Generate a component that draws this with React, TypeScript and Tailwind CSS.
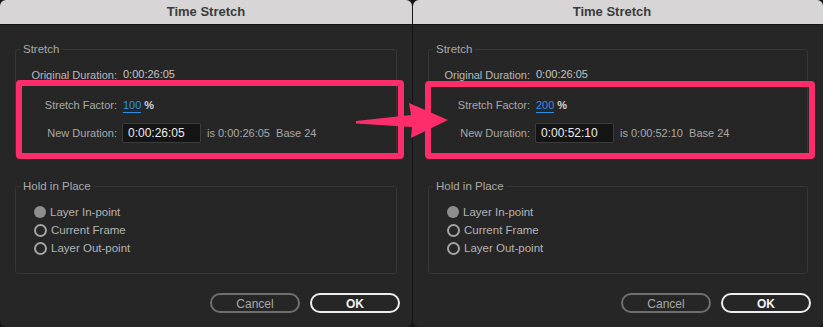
import React from "react";

interface PanelProps {
  factor: string;
  newDuration: string;
  widthClass: string;
  pinkClass: string;
  titleClass?: string;
}

const labelFont = { fontFamily: '"Liberation Sans", Arial, sans-serif' };

const Radio: React.FC<{ checked?: boolean; label: string }> = ({ checked, label }) => (
  <div className="flex h-[18px] items-center gap-[4px]">
    {checked ? (
      <span className="h-[12px] w-[12px] rounded-full bg-[#8e8e8e]" />
    ) : (
      <span className="h-[13px] w-[13px] rounded-full border-2 border-[#a4a4a4]" />
    )}
    <span className="text-[11.5px] text-[#b4b4b4]">{label}</span>
  </div>
);

const TimeStretchPanel: React.FC<PanelProps> = ({ factor, newDuration, widthClass, pinkClass, titleClass = "" }) => {
  return (
    <div className={`relative flex h-full flex-col overflow-hidden rounded-[6px] bg-[#262626] ${widthClass}`} style={labelFont}>
      {/* title bar */}
      <div className={`flex h-[25px] shrink-0 items-center justify-center border-b border-[#141414] bg-[#d7d5d5] ${titleClass}`}>
        <span className="text-[13px] font-bold text-[#3b3b3b]">Time Stretch</span>
      </div>

      <div className="flex flex-1 flex-col px-[15px] pt-[16px]">
        {/* Stretch */}
        <fieldset className="h-[116px] rounded-[3px] border border-[#363636]">
          <legend className="ml-[4px] px-[3px] text-[11.5px] text-[#a9a9a9]">Stretch</legend>
          <div className="ml-[12px] mt-[8px] grid grid-cols-[89px_1fr] items-center gap-x-[6px] text-[11px]">
            <span className="h-[16px] whitespace-nowrap text-right text-[#b8b8b8]">Original Duration:</span>
            <span className="text-[#c4c4c4]">0:00:26:05</span>

            <span className="mt-[14px] h-[16px] whitespace-nowrap text-right text-[#a9a9a9]">Stretch Factor:</span>
            <span className="mt-[14px] flex items-center gap-[3px]">
              <span className="border-b border-[#2f8fe6] leading-[14px] text-[#2f8fe6]">{factor}</span>
              <span className="font-bold text-[#d6d6d6]">%</span>
            </span>

            <span className="mt-[10px] whitespace-nowrap text-right text-[#a9a9a9]">New Duration:</span>
            <span className="-ml-px mt-[10px] flex items-center gap-[6px]">
              <span className="flex h-[20px] w-[79px] items-center rounded-[2px] border border-[#3c3c3c] bg-[#141414] px-[5px] text-[12px] text-[#ececec]">
                {newDuration}
              </span>
              <span className="whitespace-nowrap text-[11px] text-[#a9a9a9]">is {newDuration}&nbsp;&nbsp;Base 24</span>
            </span>
          </div>
        </fieldset>

        {/* Hold in Place */}
        <fieldset className="mt-[21px] h-[96px] rounded-[3px] border border-[#363636] px-[18px]">
          <legend className="-ml-[14px] px-[3px] text-[11.5px] text-[#a9a9a9]">Hold in Place</legend>
          <div className="mt-[8px] flex flex-col">
            <Radio checked label="Layer In-point" />
            <Radio label="Current Frame" />
            <Radio label="Layer Out-point" />
          </div>
        </fieldset>

        <div className="-mr-[3px] mt-[19px] flex justify-end gap-[10px]">
          <button className="h-[20px] w-[90px] rounded-full border-2 border-[#6f6f6f] text-[12px] text-[#a8a8a8]">
            Cancel
          </button>
          <button className="h-[20px] w-[90px] rounded-full border-2 border-[#eeeeee] text-[12px] font-bold text-[#f2f2f2]">
            OK
          </button>
        </div>
      </div>

      {/* annotation highlight */}
      <div className={`pointer-events-none absolute rounded-[4px] border-[6px] border-[#fd2d6c] ${pinkClass}`} />
    </div>
  );
}

export default function App() {
  return (
    <div className="relative flex h-[327px] w-[823px] gap-px overflow-hidden bg-[#151515]">
      <TimeStretchPanel factor="100" newDuration="0:00:26:05" widthClass="w-[412px]" pinkClass="left-[16px] top-[80px] h-[79px] w-[388px]" />
      <TimeStretchPanel
        factor="200"
        newDuration="0:00:52:10"
        widthClass="w-[410px]"
        titleClass="pr-[12px]"
        pinkClass="left-[12px] top-[81px] h-[78px] w-[390px]"
      />

      {/* arrow */}
      <svg className="pointer-events-none absolute left-0 top-0" width="823" height="327" viewBox="0 0 823 327">
        <polygon points="356,121 411,115 409,103 448,120 411,138 412,127 356,123.5" fill="#fd2d6c" />
      </svg>
    </div>
  );
}
